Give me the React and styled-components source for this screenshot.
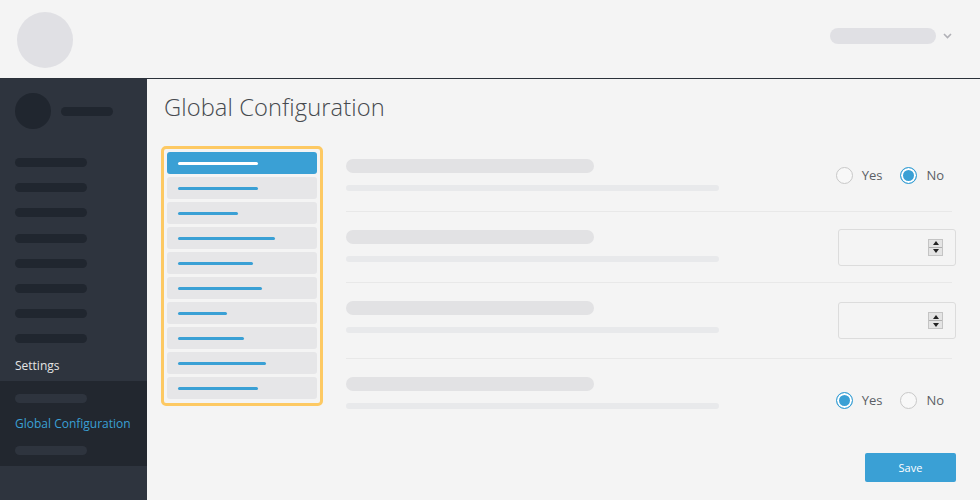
import React from 'react';
import styled, { createGlobalStyle } from 'styled-components';

const GlobalStyle = createGlobalStyle`
  html, body {
    margin: 0;
    padding: 0;
    background: #f4f4f4;
    font-family: "Open Sans", "Liberation Sans", sans-serif;
  }
  * { box-sizing: border-box; }
`;

const Page = styled.div`
  width: 980px;
  height: 500px;
  display: flex;
  flex-direction: column;
  overflow: hidden;
`;

const Header = styled.header`
  height: 79px;
  flex-shrink: 0;
  display: flex;
  align-items: center;
  justify-content: space-between;
  padding: 0 28px 0 17px;
  border-bottom: 1px solid #2b313a;
  background: #f4f4f4;
`;

const Logo = styled.div`
  width: 56px;
  height: 56px;
  border-radius: 50%;
  background: #e0e0e4;
  margin-top: 2px;
`;

const UserMenu = styled.div`
  display: flex;
  align-items: center;
  gap: 7px;
  margin-bottom: 6px;
`;

const Skeleton = styled.div`
  width: ${p => p.$w}px;
  height: ${p => p.$h}px;
  border-radius: ${p => p.$h / 2}px;
  background: ${p => p.$color};
  flex-shrink: 0;
`;

const Body = styled.div`
  flex: 1;
  display: flex;
  min-height: 0;
`;

const Sidebar = styled.nav`
  width: 147px;
  flex-shrink: 0;
  background: #2e343e;
  display: flex;
  flex-direction: column;
`;

const Profile = styled.div`
  display: flex;
  align-items: center;
  gap: 10px;
  padding: 14px 15px 0;
`;

const Avatar = styled.div`
  width: 36px;
  height: 36px;
  border-radius: 50%;
  background: #20262f;
`;

const NavList = styled.div`
  display: flex;
  flex-direction: column;
  gap: 16.2px;
  padding: 29px 15px 0;
`;

const SectionLabel = styled.div`
  padding: 14px 15px 0;
  height: 38px;
  font-size: 12px;
  color: #e4e4e4;
`;

const SubMenu = styled.div`
  background: #22272f;
  padding: 13px 15px 11px;
  display: flex;
  flex-direction: column;
`;

const SubLink = styled.div`
  font-size: 12px;
  color: #3aa0d5;
  padding: 12px 0 13px;
  line-height: 18px;
  white-space: nowrap;
`;

const Main = styled.main`
  flex: 1;
  padding: 13px 24px 0 14px;
  display: flex;
  flex-direction: column;
`;

const Title = styled.h1`
  margin: 0 0 0 3px;
  font-size: 23.7px;
  font-weight: 300;
  color: #464a4f;
  line-height: 30px;
  letter-spacing: 0.1px;
`;

const Content = styled.div`
  display: flex;
  gap: 23px;
  margin-top: 24px;
`;

const TabBox = styled.div`
  width: 162px;
  flex-shrink: 0;
  align-self: flex-start;
  border: 3px solid #fdc963;
  border-radius: 5px;
  padding: 3px 3px 4px;
  display: flex;
  flex-direction: column;
  gap: 3px;
`;

const Tab = styled.div`
  height: 22px;
  border-radius: 3px;
  background: ${p => (p.$active ? '#3aa0d5' : '#e6e6e8')};
  display: flex;
  align-items: center;
  padding-left: 11px;
`;

const TabLine = styled.div`
  height: 3px;
  border-radius: 2px;
  background: ${p => (p.$active ? '#ffffff' : '#3aa0d5')};
`;

const Form = styled.div`
  flex: 1;
  display: flex;
  flex-direction: column;
  margin-top: -5px;
`;

const Row = styled.div`
  height: ${p => p.$h}px;
  display: flex;
  align-items: center;
  justify-content: space-between;
`;

const RowText = styled.div`
  display: flex;
  flex-direction: column;
  gap: 12px;
  align-self: flex-start;
  padding-top: 18px;
`;

const Divider = styled.div`
  height: 1px;
  background: #e8e8e8;
  margin-right: 4px;
`;

const RadioGroup = styled.div`
  display: flex;
  align-items: center;
  gap: 18px;
  margin-right: 12px;
  margin-top: -2px;
`;

const RadioOption = styled.label`
  display: flex;
  align-items: center;
  gap: 9px;
  font-size: 13px;
  color: #5b5f66;
`;

const RadioCircle = styled.span`
  width: 17px;
  height: 17px;
  border-radius: 50%;
  border: 1px solid ${p => (p.$checked ? '#3aa0d5' : '#c8c8c8')};
  background: ${p => (p.$checked ? '#3aa0d5' : '#f8f8f8')};
  box-shadow: ${p => (p.$checked ? 'inset 0 0 0 2px #fff' : 'none')};
`;

const NumberBox = styled.div`
  width: 118px;
  height: 37px;
  border: 1px solid #dcdcdc;
  border-radius: 3px;
  display: flex;
  align-items: center;
  justify-content: flex-end;
  padding-right: 12px;
`;

const Spinner = styled.div`
  width: 15px;
  height: 17px;
  background: #dadada;
  border: 1px solid #c4c4c4;
  display: flex;
  flex-direction: column;
`;

const SpinHalf = styled.div`
  flex: 1;
  display: flex;
  align-items: center;
  justify-content: center;
  background: #e4e4e4;
  & + & { border-top: 1px solid #b0b0b0; }
  &::after {
    content: '';
    border-left: 3px solid transparent;
    border-right: 3px solid transparent;
    ${p => (p.$up ? 'border-bottom: 4px solid #222;' : 'border-top: 4px solid #222;')}
  }
`;

const Footer = styled.div`
  display: flex;
  justify-content: flex-end;
  padding-top: 10px;
`;

const SaveButton = styled.button`
  width: 91px;
  height: 29px;
  border: none;
  border-radius: 2px;
  background: #3aa0d5;
  color: #fff;
  font-family: "Open Sans", "Liberation Sans", sans-serif;
  font-size: 11px;
`;

const Chevron = () => (
  <svg width="9" height="6" viewBox="0 0 9 6">
    <path d="M1 1l3.5 3.5L8 1" fill="none" stroke="#b0b0b6" strokeWidth="1.6" />
  </svg>
);

const navPills = [0, 1, 2, 3, 4, 5, 6, 7];
const tabs = [80, 80, 60, 97, 75, 84, 49, 66, 88, 80];

const Radio = ({ value }) => (
  <RadioGroup>
    <RadioOption>
      <RadioCircle $checked={value === 'yes'} />
      Yes
    </RadioOption>
    <RadioOption>
      <RadioCircle $checked={value === 'no'} />
      No
    </RadioOption>
  </RadioGroup>
);

const NumberInput = () => (
  <NumberBox>
    <Spinner>
      <SpinHalf $up />
      <SpinHalf />
    </Spinner>
  </NumberBox>
);

const FieldText = () => (
  <RowText>
    <Skeleton $w={248} $h={14} $color="#e2e2e4" />
    <Skeleton $w={373} $h={6} $color="#e8e9eb" />
  </RowText>
);

export default function App() {
  return (
    <Page>
      <GlobalStyle />
      <Header>
        <Logo />
        <UserMenu>
          <Skeleton $w={106} $h={16} $color="#e0e0e4" />
          <Chevron />
        </UserMenu>
      </Header>
      <Body>
        <Sidebar>
          <Profile>
            <Avatar />
            <Skeleton $w={52} $h={9} $color="#20262f" />
          </Profile>
          <NavList>
            {navPills.map(i => (
              <Skeleton key={i} $w={72} $h={9} $color="#20262f" />
            ))}
          </NavList>
          <SectionLabel>Settings</SectionLabel>
          <SubMenu>
            <Skeleton $w={72} $h={9} $color="#2e343e" />
            <SubLink>Global Configuration</SubLink>
            <Skeleton $w={72} $h={9} $color="#2e343e" />
          </SubMenu>
        </Sidebar>
        <Main>
          <Title>Global Configuration</Title>
          <Content>
            <TabBox>
              {tabs.map((w, i) => (
                <Tab key={i} $active={i === 0}>
                  <TabLine $active={i === 0} style={{ width: w }} />
                </Tab>
              ))}
            </TabBox>
            <Form>
              <Row $h={70}>
                <FieldText />
                <Radio value="no" />
              </Row>
              <Divider />
              <Row $h={70}>
                <FieldText />
                <NumberInput />
              </Row>
              <Divider />
              <Row $h={75}>
                <FieldText />
                <NumberInput />
              </Row>
              <Divider />
              <Row $h={84}>
                <FieldText />
                <Radio value="yes" />
              </Row>
              <Footer>
                <SaveButton>Save</SaveButton>
              </Footer>
            </Form>
          </Content>
        </Main>
      </Body>
    </Page>
  );
}
